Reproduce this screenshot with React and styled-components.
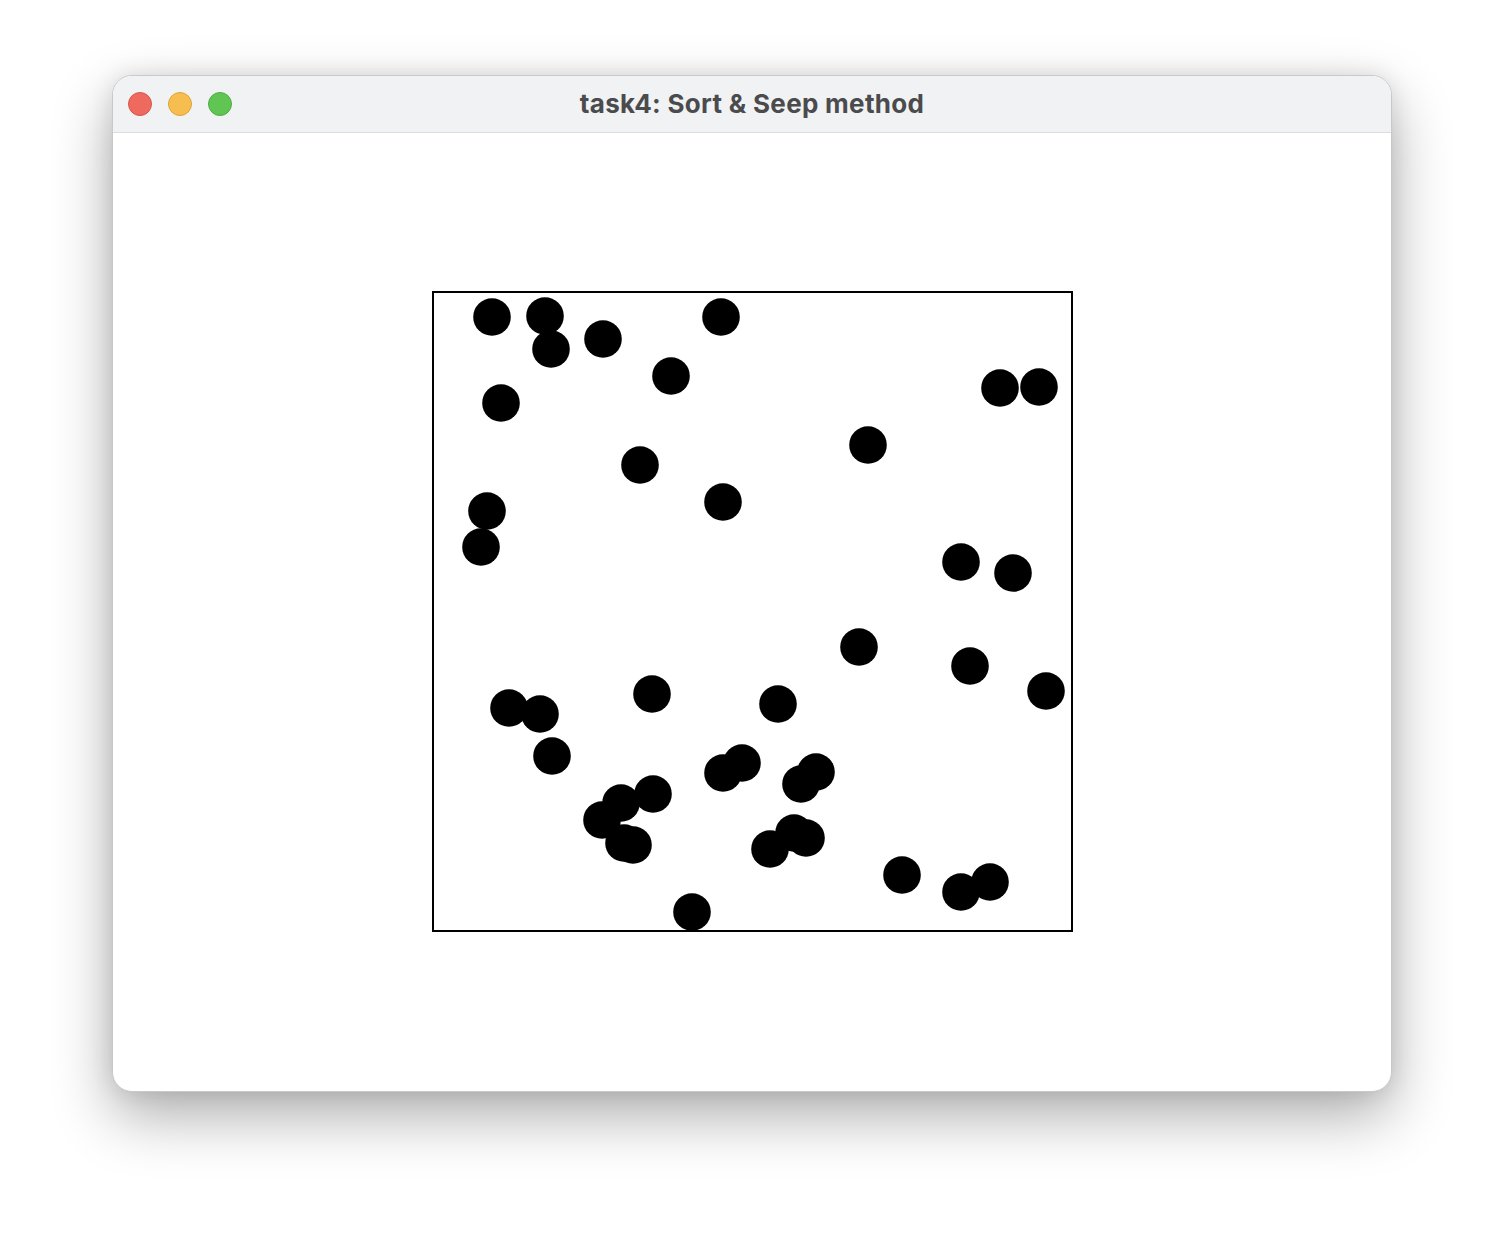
import React from 'react';
import styled, { createGlobalStyle } from 'styled-components';

const Global = createGlobalStyle`
  html, body {
    margin: 0;
    padding: 0;
    background: #ffffff;
  }
  body {
    font-family: Inter, "Noto Sans", "Liberation Sans", sans-serif;
  }
`

const Page = styled.div`
  width: 1504px;
  height: 1240px;
  padding: 75px 0 0 112px;
  box-sizing: border-box;
`

const Window = styled.div`
  width: 1280px;
  height: 1017px;
  border-radius: 20px;
  background: #ffffff;
  box-sizing: border-box;
  border: 1px solid #c9c9c9;
  box-shadow: 0 24px 60px rgba(0, 0, 0, 0.32), 0 0 22px rgba(0, 0, 0, 0.1);
  overflow: hidden;
  display: flex;
  flex-direction: column;
`

const TitleBar = styled.div`
  position: relative;
  height: 56px;
  flex-shrink: 0;
  background: #f1f2f4;
  border-bottom: 1px solid #dcdcde;
  display: flex;
  align-items: center;
  justify-content: center;
`

const Lights = styled.div`
  position: absolute;
  left: 15px;
  top: 16px;
  display: flex;
  gap: 16px;
`

const Light = styled.span`
  width: 24px;
  height: 24px;
  border-radius: 50%;
  box-sizing: border-box;
  background: ${p => p.$bg};
  border: 1px solid ${p => p.$edge};
`

const Title = styled.h1`
  margin: 0 0 2px;
  font-size: 26px;
  font-weight: 700;
  color: #4b4b4d;
  letter-spacing: 0.3px;
`

const Content = styled.div`
  flex: 1;
  display: flex;
  align-items: center;
  justify-content: center;
`

const Board = styled.div`
  width: 641px;
  height: 641px;
  border: 2px solid #000;
  box-sizing: border-box;
  margin-top: -1px;
`

const dots = [
  [492, 317], [545, 316], [551, 349], [603, 339], [721, 317], [671, 376],
  [501, 403], [640, 465], [723, 502], [487, 511], [481, 547],
  [1000, 388], [1039, 387], [868, 445], [961, 562], [1013, 573],
  [509, 708], [540, 714], [652, 694], [552, 756], [621, 803], [653, 794],
  [602, 820], [624, 843], [633, 845], [692, 912],
  [859, 647], [970, 666], [1046, 691], [778, 704], [742, 763], [723, 773],
  [816, 772], [801, 784], [794, 833], [806, 838], [770, 849], [902, 875],
  [961, 892], [990, 882],
]

function App() {
  return (
    <Page>
      <Global />
      <Window>
        <TitleBar>
          <Lights>
            <Light $bg="#ee6a5f" $edge="#d6564b" />
            <Light $bg="#f6be4f" $edge="#dca43c" />
            <Light $bg="#61c554" $edge="#4fad43" />
          </Lights>
          <Title>task4: Sort &amp; Seep method</Title>
        </TitleBar>
        <Content>
          <Board>
            <svg width="637" height="637" viewBox="434 293 637 637" style={{ display: 'block' }}>
              {dots.map(([x, y], i) => (
                <circle key={i} cx={x} cy={y} r="18.8" fill="#000" />
              ))}
            </svg>
          </Board>
        </Content>
      </Window>
    </Page>
  );
}

export default App;
